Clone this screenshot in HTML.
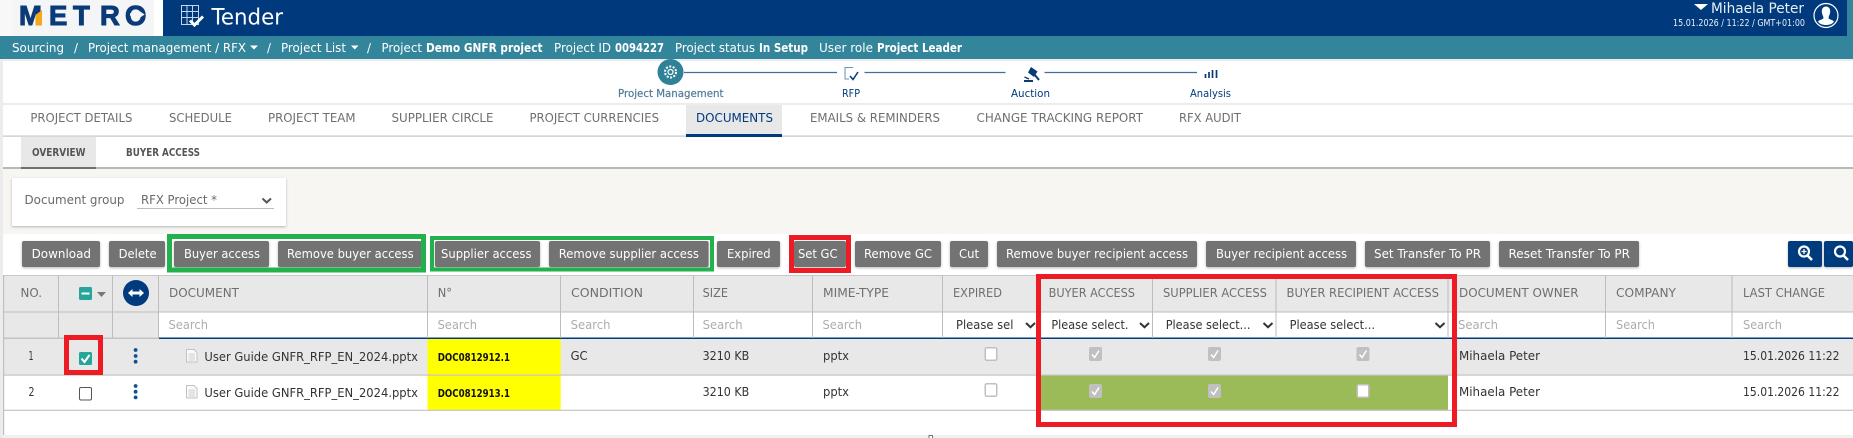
<!DOCTYPE html>
<html><head><meta charset="utf-8"><title>Tender</title>
<style>
html,body{margin:0;padding:0;background:#fff;width:1853px;height:438px;overflow:hidden}
svg{display:block}
text{font-family:"DejaVu Sans","Liberation Sans",sans-serif;font-size:12.7px;white-space:pre}
.w{fill:#fff}.wb{fill:#fff;font-weight:700;font-size:12.5px}
.tab{fill:#6f6f6f;font-size:12.3px}
.th{fill:#6f6f6f;font-size:12.3px}
.ph{fill:#adadad;font-size:12.5px}
.sel{fill:#333;font-size:12.5px}
.td{fill:#333;font-size:12.7px}
.btn{fill:#fff;font-size:12.7px}
.st{fill:#003b7e;font-size:10.8px}
</style></head><body>
<svg width="1853" height="438" viewBox="0 0 1853 438" xmlns="http://www.w3.org/2000/svg">
<defs>
<filter id="sh" x="-5%" y="-10%" width="110%" height="130%"><feDropShadow dx="0" dy="1" stdDeviation="1.2" flood-color="#000" flood-opacity=".28"/></filter>
<g id="doc"><path d="M.5.5H8L11 3.5V13H.5Z" fill="#fafafa" stroke="#c2c2c2"/><path d="M2.5 5H9M2.5 7H9M2.5 9H9M2.5 11H9" stroke="#cfcfcf" fill="none"/></g>
<path id="chev" d="M0 0L4.5 4.2 9 0" fill="none" stroke="#333" stroke-width="2"/>
<g id="gc"><rect width="13" height="14" rx="2" fill="#c0c0c0"/><path d="M3 7.5L5.6 10.5 10 3.5" fill="none" stroke="#fff" stroke-width="1.5"/></g>
<g id="ec"><rect x=".75" y=".75" width="11.5" height="12.5" rx="1.5" fill="#fff" stroke="#c0c0c0" stroke-width="1.5"/></g>
</defs>

<rect width="1853" height="438" fill="#fff"/>
<!-- top header -->
<rect x="163" width="1684" height="36" fill="#003a7d"/>
<rect x="1847" width="6" height="36" fill="#32859b"/>
<rect x="0" width="12" height="36" fill="#f8f8f8"/>
<rect x="12" width="142" height="36" fill="#f4f5f6"/>
<rect x="154" width="9" height="36" fill="#fff"/>
<!-- logo -->
<text x="19 49 73 100 125" y="25" style="font-family:'Liberation Sans',sans-serif;font-size:27.5px;font-weight:700;fill:#0b3a78;stroke:#0b3a78;stroke-width:1">METRO</text>
<path d="M35.5 15L42 10V25.500H35.5Z" fill="#f4a81d"/>
<path d="M130 14.5H142M138 11.5L142.500 14.500 138 17.500" fill="none" stroke="#f4f5f6" stroke-width="2.400"/>
<!-- tender icon -->
<g fill="none" stroke="#c7d5e8" stroke-width="1">
<path d="M181.500 5.500H198.500V24.500H181.500ZM187 5.500V24.500M192.500 5.500V24.500M181.500 11.500H198.500M181.500 17.500H198.500"/>
</g>
<path d="M190 20.500L194.500 25 203 16.500" fill="none" stroke="#fff" stroke-width="3"/>
<text x="211.500" y="24.500" textLength="71.500" lengthAdjust="spacingAndGlyphs" class="w" style="font-size:22px">Tender</text>
<!-- user -->
<path d="M1694 4H1708L1701 10Z" fill="#fff"/>
<text x="1711" y="13" textLength="93" lengthAdjust="spacingAndGlyphs" style="fill:#e8eef6;font-size:14px">Mihaela Peter</text>
<text x="1673" y="26" textLength="132" lengthAdjust="spacingAndGlyphs" style="fill:#e8eef6;font-size:9.500px;font-weight:400">15.01.2026 / 11:22 / GMT+01:00</text>
<circle cx="1826" cy="15.500" r="12" fill="#003a7d" stroke="#fff" stroke-width="1.200"/>
<path d="M1826 6.500c3 0 4.500 2.500 4.200 5.500-.3 2.500-1.500 4-1.700 6 .3 1.500 4.500 2 5.500 3.500-1.500 2.500-4.500 3.500-8 3.500s-6.500-1-8-3.500c1-1.500 5.200-2 5.500-3.500-.2-2-1.400-3.500-1.700-6-.3-3 1.200-5.500 4.200-5.500Z" fill="#fff"/>

<!-- teal bar -->
<rect y="36" width="1853" height="23" fill="#32859b"/>
<g>
<text x="12" y="52" textLength="52" lengthAdjust="spacingAndGlyphs" class="w">Sourcing</text>
<text x="74" y="52" textLength="4" lengthAdjust="spacingAndGlyphs" class="w">/</text>
<text x="88" y="52" textLength="158" lengthAdjust="spacingAndGlyphs" class="w">Project management / RFX</text>
<path d="M250 45.500H258L254 49.500Z" fill="#fff"/>
<text x="267" y="52" textLength="4" lengthAdjust="spacingAndGlyphs" class="w">/</text>
<text x="281" y="52" textLength="65" lengthAdjust="spacingAndGlyphs" class="w">Project List</text>
<path d="M351 45.500H358.500L354.700 49.500Z" fill="#fff"/>
<text x="367" y="52" textLength="4" lengthAdjust="spacingAndGlyphs" class="w">/</text>
<text x="381.500" y="52" textLength="40.500" lengthAdjust="spacingAndGlyphs" class="w">Project</text>
<text x="426" y="52" textLength="116.500" lengthAdjust="spacingAndGlyphs" class="wb">Demo GNFR project</text>
<text x="554" y="52" textLength="57" lengthAdjust="spacingAndGlyphs" class="w">Project ID</text>
<text x="615" y="52" textLength="49" lengthAdjust="spacingAndGlyphs" class="wb">0094227</text>
<text x="675" y="52" textLength="80" lengthAdjust="spacingAndGlyphs" class="w">Project status</text>
<text x="759" y="52" textLength="49" lengthAdjust="spacingAndGlyphs" class="wb">In Setup</text>
<text x="819" y="52" textLength="54" lengthAdjust="spacingAndGlyphs" class="w">User role</text>
<text x="877" y="52" textLength="85" lengthAdjust="spacingAndGlyphs" class="wb">Project Leader</text>
</g>
<rect y="59" width="1853" height="2" fill="#ececec"/>
<rect y="61" width="1853" height="44" fill="#fff"/>

<!-- stepper -->
<path d="M684 72.500H837M864.500 72.500H1005.500M1044.500 72.500H1197" stroke="#3f6ea3" stroke-width="1.200"/>
<circle cx="670.500" cy="72" r="13" fill="#2f8197"/>
<g fill="none" stroke="#fff" stroke-width="1.200"><circle cx="670.500" cy="72" r="2.500"/><circle cx="670.500" cy="72" r="5.500" stroke-width="2" stroke-dasharray="2 1.500"/></g>
<path d="M853 67.500H845V79H849" fill="none" stroke="#6d8fb5" stroke-width="1"/>
<path d="M850 76L853 79.500 858 72" fill="none" stroke="#003b7e" stroke-width="1.500"/>
<path d="M1031 67L1037.500 71.500 1034 77 1028 72.500Z" fill="#0b3a78"/>
<path d="M1034.500 74.500L1039 80" stroke="#0b3a78" stroke-width="2"/>
<path d="M1024.500 77L1029 79" stroke="#0b3a78" stroke-width="1.500"/>
<path d="M1024 81H1033" stroke="#0b3a78" stroke-width="2"/>
<path d="M1205.500 74V78M1209 72V78M1212.500 70V78M1216.500 70V78" stroke="#0b3a78" stroke-width="1.700"/>
<text x="618" y="97" textLength="105.500" lengthAdjust="spacingAndGlyphs" style="fill:#4f7c97;font-size:10.800px;font-weight:400;stroke:#4f7c97;stroke-width:.2">Project Management</text>
<text x="842" y="97" textLength="18" lengthAdjust="spacingAndGlyphs" class="st">RFP</text>
<text x="1011" y="97" textLength="39" lengthAdjust="spacingAndGlyphs" class="st">Auction</text>
<text x="1190" y="97" textLength="41" lengthAdjust="spacingAndGlyphs" class="st">Analysis</text>
<rect y="103" width="1853" height="2" fill="#ececec"/>

<!-- tabs -->
<rect x="686" y="105" width="96" height="31" fill="#e8e8e8"/>
<rect x="3" y="135.500" width="1850" height="1.200" fill="#c4c4c4"/>
<rect x="686" y="134" width="96" height="3" fill="#003b7e"/>
<text x="30.400" y="122" textLength="102" lengthAdjust="spacingAndGlyphs" class="tab">PROJECT DETAILS</text>
<text x="169" y="122" textLength="63" lengthAdjust="spacingAndGlyphs" class="tab">SCHEDULE</text>
<text x="268" y="122" textLength="87.500" lengthAdjust="spacingAndGlyphs" class="tab">PROJECT TEAM</text>
<text x="391.500" y="122" textLength="102" lengthAdjust="spacingAndGlyphs" class="tab">SUPPLIER CIRCLE</text>
<text x="529.500" y="122" textLength="129.500" lengthAdjust="spacingAndGlyphs" class="tab">PROJECT CURRENCIES</text>
<text x="696" y="122" textLength="77" lengthAdjust="spacingAndGlyphs" style="fill:#003b7e;font-size:12.300px">DOCUMENTS</text>
<text x="810" y="122" textLength="130" lengthAdjust="spacingAndGlyphs" class="tab">EMAILS &amp; REMINDERS</text>
<text x="976.500" y="122" textLength="166.500" lengthAdjust="spacingAndGlyphs" class="tab">CHANGE TRACKING REPORT</text>
<text x="1179" y="122" textLength="62" lengthAdjust="spacingAndGlyphs" class="tab">RFX AUDIT</text>

<!-- subtabs -->
<rect x="21" y="137" width="75" height="31" fill="#e8e8e8"/>
<text x="32" y="156" textLength="53.500" lengthAdjust="spacingAndGlyphs" style="fill:#555;font-size:10.300px;font-weight:700">OVERVIEW</text>
<text x="126" y="156" textLength="74" lengthAdjust="spacingAndGlyphs" style="fill:#555;font-size:10.300px;font-weight:700">BUYER ACCESS</text>

<!-- beige -->
<rect x="3" y="168" width="1850" height="66" fill="#f7f6f3"/>
<rect x="3" y="167" width="1850" height="2" fill="#b8b8b8"/>
<rect x="21" y="167" width="75" height="2" fill="#707070"/>
<rect x="12" y="178" width="274" height="48" fill="#fff" filter="url(#sh)"/>
<text x="24.500" y="204" textLength="100" lengthAdjust="spacingAndGlyphs" style="fill:#6a6a6a;font-size:12.700px">Document group</text>
<text x="141" y="204" textLength="76" lengthAdjust="spacingAndGlyphs" style="fill:#6a6a6a;font-size:12.700px">RFX Project *</text>
<path d="M262.500 198.500L266.700 202.500 271 198.500" fill="none" stroke="#555" stroke-width="2"/>
<rect x="137" y="208" width="137" height="1" fill="#bcbcbc"/>

<!-- toolbar -->
<rect x="3" y="234" width="1850" height="41" fill="#fff"/>
<g fill="#737373" filter="url(#sh)">
<rect x="22" y="241" width="78" height="26" rx="2"/>
<rect x="109" y="241" width="56" height="26" rx="2"/>
<rect x="174" y="241" width="95" height="26" rx="2"/>
<rect x="278" y="241" width="143.500" height="26" rx="2"/>
<rect x="435" y="241" width="105" height="26" rx="2"/>
<rect x="549" y="241" width="159.600" height="26" rx="2"/>
<rect x="717" y="241" width="63" height="26" rx="2"/>
<rect x="794" y="241" width="52" height="26" rx="2"/>
<rect x="855" y="241" width="86" height="26" rx="2"/>
<rect x="950" y="241" width="38" height="26" rx="2"/>
<rect x="997" y="241" width="200" height="26" rx="2"/>
<rect x="1206" y="241" width="150" height="26" rx="2"/>
<rect x="1365" y="241" width="125" height="26" rx="2"/>
<rect x="1499" y="241" width="140" height="26" rx="2"/>
</g>
<g fill="#003b7e" filter="url(#sh)">
<rect x="1788" y="241" width="34" height="26" rx="2"/>
<rect x="1824" y="241" width="29" height="26" rx="2"/>
</g>
<circle cx="1804" cy="251.500" r="5" fill="none" stroke="#fff" stroke-width="2.200"/>
<path d="M1807.500 255.500L1812 260" stroke="#fff" stroke-width="2.500"/>
<path d="M1801.500 251.500H1806.500M1804 249V254" stroke="#fff" stroke-width="1.300"/>
<circle cx="1840" cy="251.500" r="5" fill="none" stroke="#fff" stroke-width="2.200"/>
<path d="M1843.500 255.500L1848 260" stroke="#fff" stroke-width="2.500"/>
<g class="btns">
<text x="31.600" y="258" textLength="59.400" lengthAdjust="spacingAndGlyphs" class="btn">Download</text>
<text x="118.600" y="258" textLength="38" lengthAdjust="spacingAndGlyphs" class="btn">Delete</text>
<text x="184" y="258" textLength="76" lengthAdjust="spacingAndGlyphs" class="btn">Buyer access</text>
<text x="287" y="258" textLength="126.600" lengthAdjust="spacingAndGlyphs" class="btn">Remove buyer access</text>
<text x="441" y="258" textLength="90.500" lengthAdjust="spacingAndGlyphs" class="btn">Supplier access</text>
<text x="558.700" y="258" textLength="140.300" lengthAdjust="spacingAndGlyphs" class="btn">Remove supplier access</text>
<text x="727" y="258" textLength="43.600" lengthAdjust="spacingAndGlyphs" class="btn">Expired</text>
<text x="798" y="258" textLength="39.500" lengthAdjust="spacingAndGlyphs" class="btn">Set GC</text>
<text x="864" y="258" textLength="68" lengthAdjust="spacingAndGlyphs" class="btn">Remove GC</text>
<text x="959" y="258" textLength="20" lengthAdjust="spacingAndGlyphs" class="btn">Cut</text>
<text x="1006" y="258" textLength="182" lengthAdjust="spacingAndGlyphs" class="btn">Remove buyer recipient access</text>
<text x="1216" y="258" textLength="131" lengthAdjust="spacingAndGlyphs" class="btn">Buyer recipient access</text>
<text x="1374" y="258" textLength="107" lengthAdjust="spacingAndGlyphs" class="btn">Set Transfer To PR</text>
<text x="1508.500" y="258" textLength="121.500" lengthAdjust="spacingAndGlyphs" class="btn">Reset Transfer To PR</text>
</g>

<!-- table header -->
<rect x="4" y="275" width="1849" height="37" fill="#e8e8e8"/>
<rect x="4" y="312" width="155" height="27" fill="#e8e8e8"/>
<rect x="4" y="339" width="1849" height="36" fill="#e8e8e8"/>
<rect x="1041" y="375" width="407" height="35" fill="#9bbb59"/>
<rect x="427.500" y="339" width="133.200" height="71" fill="#ffff00"/>
<rect x="4" y="275" width="1849" height="1" fill="#c8c8c8"/>
<rect x="4" y="311.500" width="1849" height="1" fill="#bdbdbd"/>
<rect x="159" y="337.500" width="1694" height="1.500" fill="#003b7e"/>
<rect x="4" y="337.500" width="155" height="1.500" fill="#c4c4c4"/>
<rect x="4" y="374.500" width="1849" height="1.200" fill="#c4c4c4"/>
<rect x="4" y="409.700" width="1849" height="1.200" fill="#c4c4c4"/>
<path d="M58.500 275V338M112.500 275V338M158.500 275V338M427.500 275V338M560.500 275V338M693.500 275V338M812.500 275V338M942.500 275V338M1152.500 275V338M1276 275V338M1448 275V338M1605.500 275V338M1732 275V338" stroke="#bdbdbd" stroke-width="1" fill="none"/>
<rect x="3" y="275" width="1.200" height="163" fill="#c0c0c0"/>
<rect x="0" y="59" width="3" height="379" fill="#ececec"/>

<text x="20.500" y="297" textLength="21.500" lengthAdjust="spacingAndGlyphs" class="th">NO.</text>
<rect x="79" y="287" width="13" height="13" rx="1.500" fill="#26a69a"/>
<rect x="81.500" y="292.500" width="8" height="2" fill="#fff"/>
<path d="M97 292H106L101.500 297Z" fill="#777"/>
<circle cx="136" cy="293" r="13" fill="#003b7e"/>
<path d="M128 293L132.500 289V291.500H139.500V289L144 293 139.500 297V294.500H132.500V297Z" fill="#fff"/>
<text x="169" y="297" textLength="70" lengthAdjust="spacingAndGlyphs" class="th">DOCUMENT</text>
<text x="437.700" y="297" textLength="14.300" lengthAdjust="spacingAndGlyphs" class="th">N°</text>
<text x="571" y="297" textLength="72" lengthAdjust="spacingAndGlyphs" class="th">CONDITION</text>
<text x="702.600" y="297" textLength="25.400" lengthAdjust="spacingAndGlyphs" class="th">SIZE</text>
<text x="823" y="297" textLength="66" lengthAdjust="spacingAndGlyphs" class="th">MIME-TYPE</text>
<text x="953" y="297" textLength="49" lengthAdjust="spacingAndGlyphs" class="th">EXPIRED</text>
<text x="1048.600" y="297" textLength="86.400" lengthAdjust="spacingAndGlyphs" class="th">BUYER ACCESS</text>
<text x="1163" y="297" textLength="104" lengthAdjust="spacingAndGlyphs" class="th">SUPPLIER ACCESS</text>
<text x="1286.500" y="297" textLength="152.500" lengthAdjust="spacingAndGlyphs" class="th">BUYER RECIPIENT ACCESS</text>
<text x="1459" y="297" textLength="119.500" lengthAdjust="spacingAndGlyphs" class="th">DOCUMENT OWNER</text>
<text x="1616" y="297" textLength="60" lengthAdjust="spacingAndGlyphs" class="th">COMPANY</text>
<text x="1743" y="297" textLength="82" lengthAdjust="spacingAndGlyphs" class="th">LAST CHANGE</text>

<!-- filters -->
<text x="168.500" y="329" textLength="39.500" lengthAdjust="spacingAndGlyphs" class="ph">Search</text>
<text x="437.500" y="329" textLength="39.500" lengthAdjust="spacingAndGlyphs" class="ph">Search</text>
<text x="570.600" y="329" textLength="39.900" lengthAdjust="spacingAndGlyphs" class="ph">Search</text>
<text x="702.600" y="329" textLength="40" lengthAdjust="spacingAndGlyphs" class="ph">Search</text>
<text x="822.500" y="329" textLength="39.500" lengthAdjust="spacingAndGlyphs" class="ph">Search</text>
<text x="956" y="329" textLength="57.400" lengthAdjust="spacingAndGlyphs" class="sel">Please sel</text>
<use href="#chev" x="1026" y="323"/>
<text x="1051.400" y="329" textLength="77.100" lengthAdjust="spacingAndGlyphs" class="sel">Please select.</text>
<use href="#chev" x="1140" y="323"/>
<text x="1165.700" y="329" textLength="84.800" lengthAdjust="spacingAndGlyphs" class="sel">Please select...</text>
<use href="#chev" x="1263.500" y="323"/>
<text x="1289.600" y="329" textLength="85.400" lengthAdjust="spacingAndGlyphs" class="sel">Please select...</text>
<use href="#chev" x="1435.500" y="323"/>
<text x="1458" y="329" textLength="40" lengthAdjust="spacingAndGlyphs" class="ph">Search</text>
<text x="1616" y="329" textLength="39" lengthAdjust="spacingAndGlyphs" class="ph">Search</text>
<text x="1743" y="329" textLength="39" lengthAdjust="spacingAndGlyphs" class="ph">Search</text>

<!-- row 1 -->
<text x="28.500" y="360" textLength="5" lengthAdjust="spacingAndGlyphs" class="td">1</text>
<rect x="79" y="352" width="13" height="13" rx="1.500" fill="#26a69a"/>
<path d="M81.500 358.500L84.500 362 89.500 355" fill="none" stroke="#fff" stroke-width="2"/>
<g fill="#0f4f92"><circle cx="135.600" cy="350" r="1.900"/><circle cx="135.600" cy="356" r="1.900"/><circle cx="135.600" cy="361.700" r="1.900"/></g>
<use href="#doc" x="186" y="349"/>
<text x="204.400" y="361" textLength="213.600" lengthAdjust="spacingAndGlyphs" class="td">User Guide GNFR_RFP_EN_2024.pptx</text>
<text x="437.700" y="361" textLength="72.300" lengthAdjust="spacingAndGlyphs" style="fill:#111;font-size:10.800px;font-weight:700">DOC0812912.1</text>
<text x="570.600" y="360" textLength="17" lengthAdjust="spacingAndGlyphs" class="td">GC</text>
<text x="702.600" y="360" textLength="46.700" lengthAdjust="spacingAndGlyphs" class="td">3210 KB</text>
<text x="823" y="360" textLength="26" lengthAdjust="spacingAndGlyphs" class="td">pptx</text>
<use href="#ec" x="984.500" y="347"/>
<use href="#gc" x="1089" y="347"/>
<use href="#gc" x="1208" y="347"/>
<use href="#gc" x="1356.500" y="347"/>
<text x="1459" y="360" textLength="81" lengthAdjust="spacingAndGlyphs" class="td">Mihaela Peter</text>
<text x="1743" y="360" textLength="96.500" lengthAdjust="spacingAndGlyphs" class="td">15.01.2026 11:22</text>

<!-- row 2 -->
<text x="28.500" y="396" textLength="6" lengthAdjust="spacingAndGlyphs" class="td">2</text>
<rect x="79.500" y="387.500" width="12" height="12.500" rx="1.500" fill="#fff" stroke="#555" stroke-width="1"/>
<g fill="#0f4f92"><circle cx="135.600" cy="386" r="1.900"/><circle cx="135.600" cy="391.700" r="1.900"/><circle cx="135.600" cy="397.400" r="1.900"/></g>
<use href="#doc" x="186" y="385"/>
<text x="204.400" y="397" textLength="213.600" lengthAdjust="spacingAndGlyphs" class="td">User Guide GNFR_RFP_EN_2024.pptx</text>
<text x="437.700" y="397" textLength="72.300" lengthAdjust="spacingAndGlyphs" style="fill:#111;font-size:10.800px;font-weight:700">DOC0812913.1</text>
<text x="702.600" y="396" textLength="46.700" lengthAdjust="spacingAndGlyphs" class="td">3210 KB</text>
<text x="823" y="396" textLength="26" lengthAdjust="spacingAndGlyphs" class="td">pptx</text>
<use href="#ec" x="984.500" y="383"/>
<use href="#gc" x="1089" y="384"/>
<use href="#gc" x="1208" y="384"/>
<use href="#ec" x="1356.500" y="384"/>
<text x="1459" y="396" textLength="81" lengthAdjust="spacingAndGlyphs" class="td">Mihaela Peter</text>
<text x="1743" y="396" textLength="96.500" lengthAdjust="spacingAndGlyphs" class="td">15.01.2026 11:22</text>

<!-- bottom -->
<rect x="3" y="435" width="1850" height="3" fill="#f0f0f0"/>
<rect x="929" y="435.500" width="3.500" height="3" fill="#fff" stroke="#555" stroke-width=".8"/>

<!-- annotations -->
<g fill="none">
<rect x="169.500" y="236.500" width="254" height="33.500" stroke="#22b14c" stroke-width="5"/>
<rect x="432" y="238" width="280" height="31.500" stroke="#22b14c" stroke-width="4"/>
<rect x="791.500" y="237.500" width="57" height="33" stroke="#ed1c24" stroke-width="5"/>
<rect x="66.500" y="337.500" width="34" height="35" stroke="#ed1c24" stroke-width="5"/>
<rect x="1038.500" y="276.500" width="416" height="148" stroke="#ed1c24" stroke-width="5"/>
</g>
</svg>
</body></html>
